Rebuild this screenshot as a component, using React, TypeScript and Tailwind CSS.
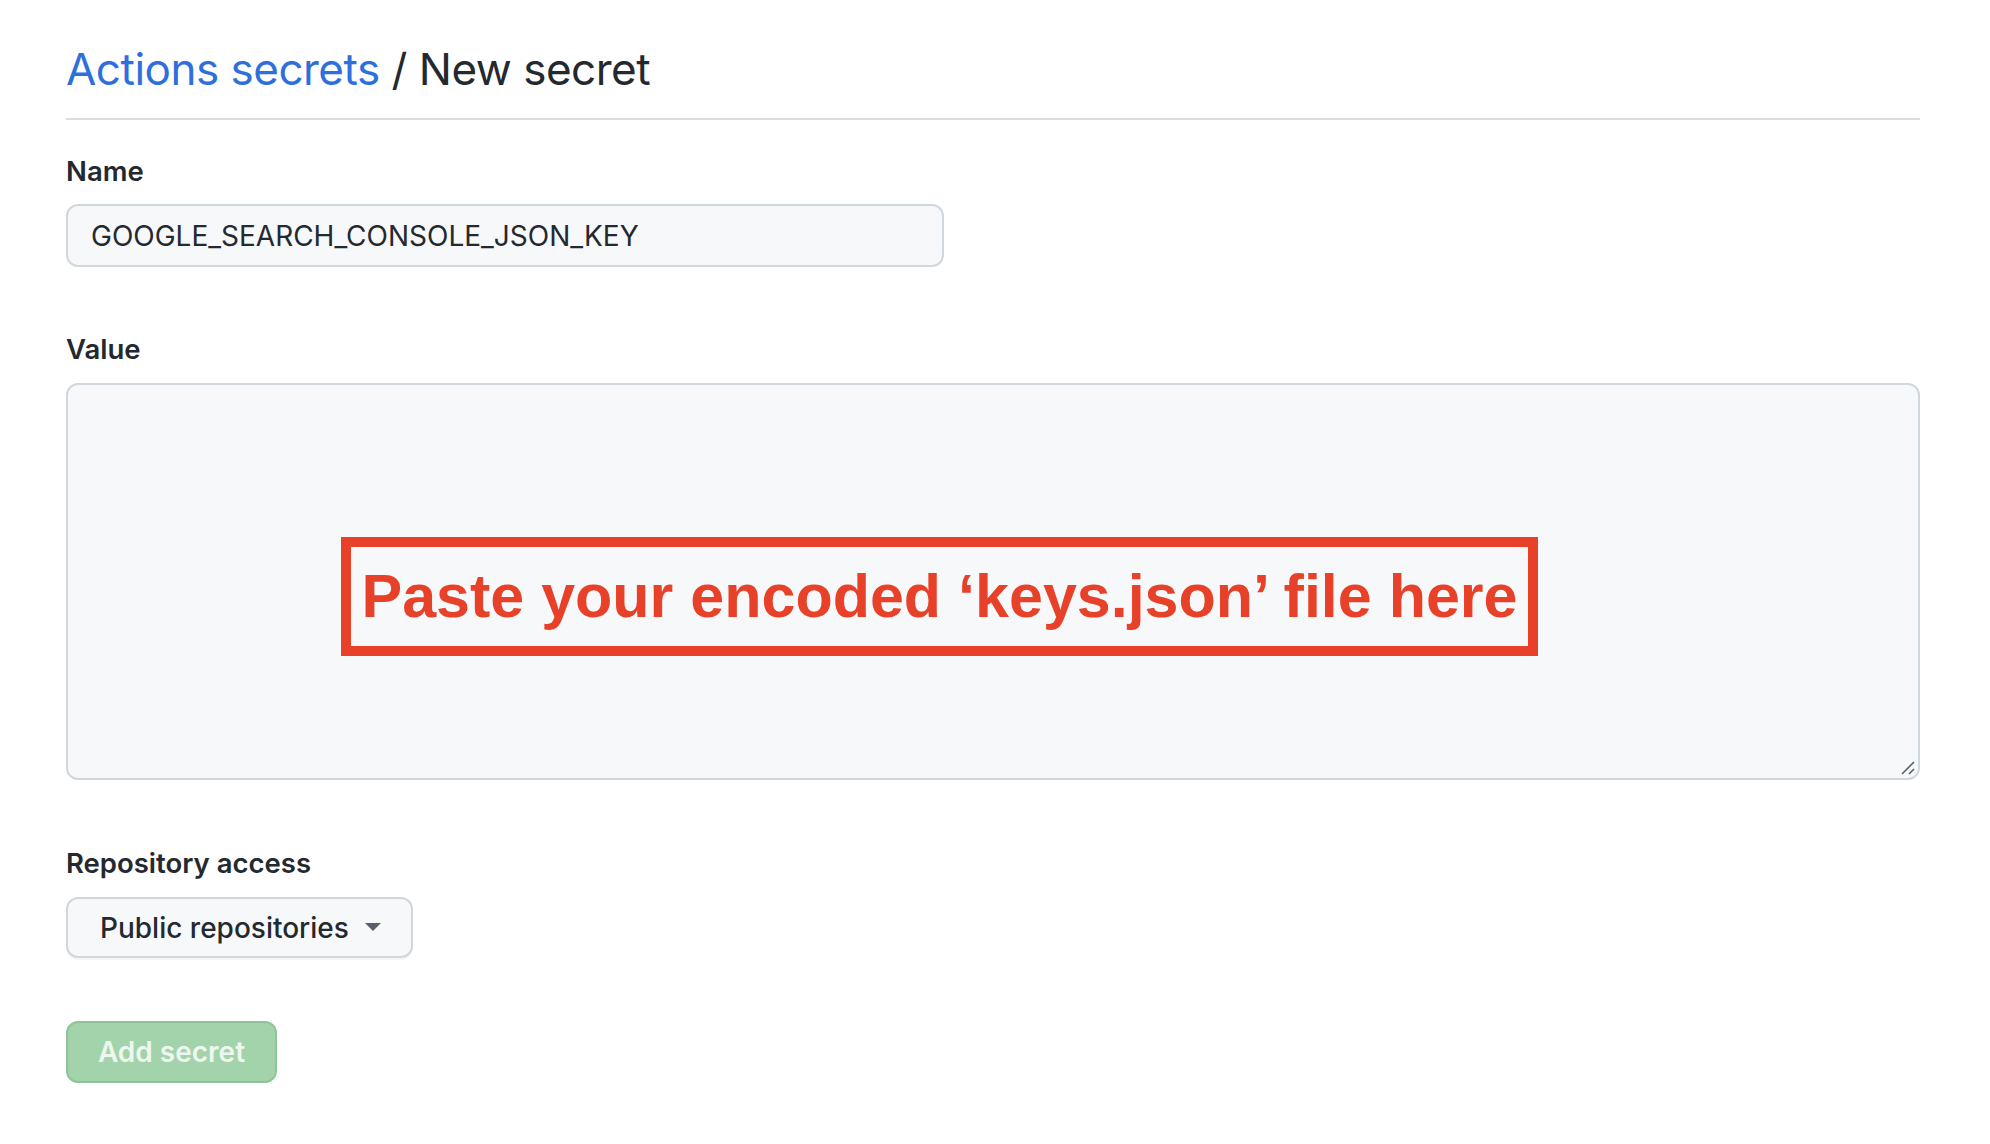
import React from "react";

const ui = { fontFamily: "Inter, 'Liberation Sans', sans-serif" };
const helv = { fontFamily: "'Liberation Sans', Arial, sans-serif" };

function Label({ children }: { children: React.ReactNode }) {
	return (
		<div className="text-[27.5px] font-semibold leading-[40px] text-[#24292f]">
			{children}
		</div>
	);
}

export default function App() {
	return (
		<div className="w-full h-[1144px] bg-white pl-[66px] pr-[70px]" style={ui}>
			{/* page heading */}
			<div className="pt-[40px] pb-[20px] border-b-2 border-[#d8dee4]">
				<h2 className="text-[44px] leading-[58px] font-normal text-[#24292f] tracking-[-0.5px]">
					<a className="text-[#2f6fdc]">Actions secrets</a> / New secret
				</h2>
			</div>

			<div className="mt-[31px]">
				<Label>Name</Label>
				<div className="mt-[13px] w-[878px] h-[63px] rounded-[12px] border-2 border-[#d0d7de] bg-[#f6f8fa] flex items-center pl-[23px] text-[28px] text-[#24292f]">
					GOOGLE_SEARCH_CONSOLE_JSON_KEY
				</div>
			</div>

			<div className="mt-[62px]">
				<Label>Value</Label>
				<div className="relative mt-[14px] h-[397px] rounded-[12px] border-2 border-[#d0d7de] bg-[#f6f8fa]">
					{/* annotation pasted over the textarea */}
					<div
						className="absolute left-[273px] top-[152px] w-[1197px] h-[119px] border-[10px] border-[#e8412a] flex items-center justify-center text-[61px] font-bold text-[#e8412a] whitespace-nowrap"
						style={helv}
					>
						Paste your encoded ‘keys.json’ file here
					</div>
					<svg
						className="absolute right-[3px] bottom-[3px] w-[14px] h-[14px]"
						viewBox="0 0 14 14"
						fill="none"
						stroke="#57606a"
						strokeWidth={1.6}
					>
						<path d="M1 13L13 1" />
						<path d="M8 13L13 8" />
					</svg>
				</div>
			</div>

			<div className="mt-[63px]">
				<Label>Repository access</Label>
				<button
					type="button"
					className="mt-[14px] h-[61px] pl-[32px] pr-[30px] rounded-[12px] border-2 border-[#d0d7de] bg-[#f6f8fa] flex items-center gap-[16px] text-[28px] font-medium text-[#24292f] shadow-[0_2px_0_rgba(27,31,36,0.04)]"
				>
					Public repositories
					<svg width="16" height="9" viewBox="0 0 16 9">
						<path d="M0 0h16L8 8z" fill="#57606a" />
					</svg>
				</button>
			</div>

			<button
				type="button"
				className="mt-[63px] w-[211px] h-[62px] rounded-[12px] border-2 border-[#8fc49b] bg-[#a3d3aa] text-[28px] font-semibold text-[#eef7ef] flex items-center justify-center"
			>
				Add secret
			</button>
		</div>
	);
}
